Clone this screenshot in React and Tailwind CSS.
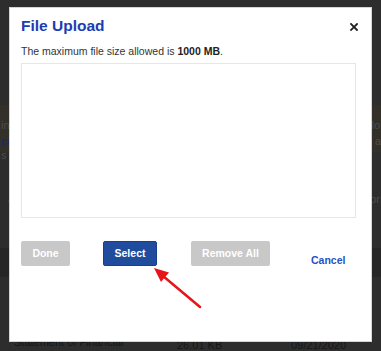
export default function App() {
  const font = { fontFamily: '"Liberation Sans", Arial, sans-serif' };
  return (
    <div className="relative w-[381px] h-[351px] overflow-hidden bg-[#2d2d2d]" style={font}>
      {/* dimmed page behind the overlay */}
      <div className="flex flex-col">
        <div className="h-[105px]" />
        <div className="h-[47px] bg-[#33302a] flex flex-col pt-[12px] text-[11px] leading-[16px]">
          <div className="flex justify-between px-[1px] text-[#4c4c4c]">
            <span>in</span>
            <span>lo</span>
          </div>
          <div className="flex justify-between pl-[1px] text-[#1c2a5e] font-bold">
            <span>cc</span>
            <span className="font-normal text-[#4c4c4c]">n a</span>
          </div>
        </div>
        <div className="h-[96px] flex flex-col">
          <div className="text-[11px] leading-[14px] text-[#4c4c4c] pl-[1px] -mt-[4px]">s</div>
          <div className="flex justify-between pl-[8px] pr-[1px] mt-[30px] text-[11px] leading-[14px] text-[#4c4c4c]">
            <span>a</span>
            <span>or</span>
          </div>
        </div>
        <div className="h-[29px] bg-[#262626]" />
        <div className="h-[60px] flex text-[11px] leading-[13px] text-[#161616] pt-[62px]">
          <span className="ml-[14px] w-[163px] -mt-[3px]">Statement of Financial</span>
          <span className="w-[114px]">26.01 KB</span>
          <span>09/21/2020</span>
        </div>
      </div>

      {/* modal */}
      <div className="absolute left-[9px] top-[7px] w-[363px] h-[335px] bg-white border border-[#d4d4d4] pl-[11px] pt-[9px] flex flex-col">
        <div className="flex justify-between items-start w-[337px]">
          <h2 className="text-[15.5px] leading-[18px] font-bold text-[#1a3db3]">File Upload</h2>
          <svg width="8" height="8" viewBox="0 0 8 8" className="mt-[6px]">
            <path d="M1 1 L7 7 M7 1 L1 7" stroke="#222" strokeWidth="1.8" strokeLinecap="square" />
          </svg>
        </div>
        <p className="mt-[10px] text-[10.5px] leading-[13px] text-[#333]">
          The maximum file size allowed is <b className="font-bold text-[#222]">1000 MB</b>.
        </p>
        <div className="mt-[5px] w-[335px] h-[155px] border border-[#e6e6e6] bg-white" />
        <div className="mt-[23px] flex items-start text-[10.5px] font-bold">
          <button className="w-[49px] h-[25px] rounded-[2px] bg-[#c8c8c8] text-white">Done</button>
          <button className="ml-[33px] w-[54px] h-[25px] rounded-[2px] bg-[#1f4c9c] border border-[#17408a] text-white">Select</button>
          <button className="ml-[34px] w-[79px] h-[25px] rounded-[2px] bg-[#c8c8c8] text-white">Remove All</button>
          <span className="ml-[41px] mt-[13px] leading-[13px] text-[#1f52c2]">Cancel</span>
        </div>
      </div>

      {/* red arrow annotation */}
      <svg className="absolute left-0 top-0" width="381" height="351" viewBox="0 0 381 351">
        <line x1="200" y1="307" x2="163" y2="276" stroke="#e8141b" strokeWidth="2.5" strokeLinecap="round" />
        <polygon points="154,268 169,272.5 161,282" fill="#e8141b" />
      </svg>
    </div>
  );
}
